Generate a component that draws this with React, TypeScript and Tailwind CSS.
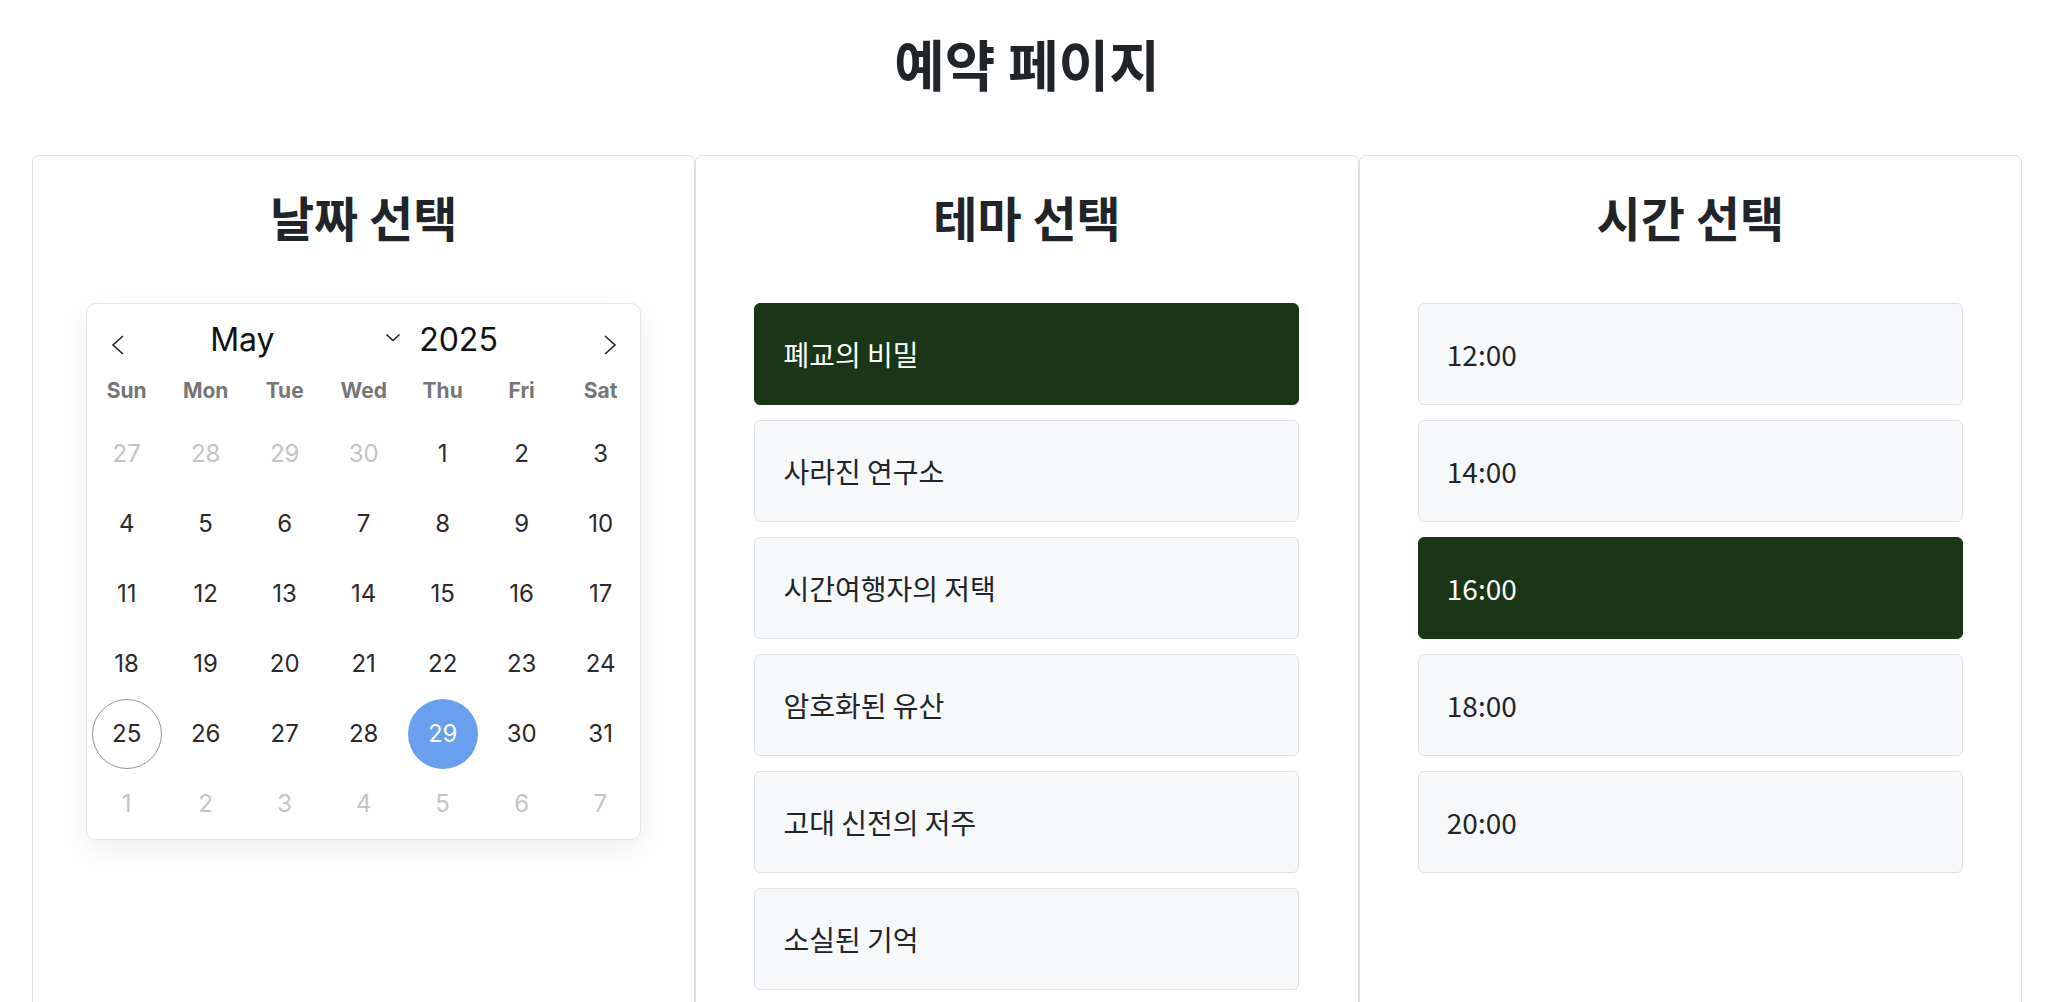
import React, { useState } from 'react';

const themes = ['폐교의 비밀', '사라진 연구소', '시간여행자의 저택', '암호화된 유산', '고대 신전의 저주', '소실된 기억'];
const times = ['12:00', '14:00', '16:00', '18:00', '20:00'];
const weekdays = ['Sun', 'Mon', 'Tue', 'Wed', 'Thu', 'Fri', 'Sat'];

const kr = { fontFamily: '"Noto Sans CJK KR", "Noto Sans", sans-serif' };
const latin = { fontFamily: 'Inter, "Noto Sans", sans-serif' };

type Day = { n: number; outside: boolean };

const buildDays = (): Day[] => {
  const days: Day[] = [];
  [27, 28, 29, 30].forEach(n => days.push({ n, outside: true }));
  for (let i = 1; i <= 31; i++) days.push({ n: i, outside: false });
  for (let i = 1; i <= 7; i++) days.push({ n: i, outside: true });
  return days;
};

const Chevron = ({ dir }: { dir: 'left' | 'right' }) => (
  <svg width="14" height="22" viewBox="0 0 14 22" fill="none">
    <path
      d={dir === 'left' ? 'M12 2 L2 11 L12 20' : 'M2 2 L12 11 L2 20'}
      stroke="#222"
      strokeWidth="1.6"
    />
  </svg>
);

const Calendar: React.FC = () => {
  const [selected, setSelected] = useState(29);
  const days = buildDays();

  return (
    <div
      className="w-[555px] mx-auto mt-[4px] bg-white border border-[#e4e4e4] rounded-[10px] shadow-[0_10px_28px_rgba(0,0,0,0.07)] pt-[12px]"
      style={latin}
    >
      <div className="h-[48px] flex items-center">
        <button className="ml-[24px] w-[14px] flex items-center mt-[10px]">
          <Chevron dir="left" />
        </button>
        <span className="ml-[85px] w-[175px] text-[32px] text-[#111] leading-none">May</span>
        <svg width="16" height="9" viewBox="0 0 16 9" fill="none" className="mb-[4px]">
          <path d="M1.5 1.5 L8 7.5 L14.5 1.5" stroke="#222" strokeWidth="1.6" />
        </svg>
        <span className="ml-[18px] text-[32px] text-[#111] leading-none">2025</span>
        <button className="ml-auto mr-[23px] w-[14px] flex items-center mt-[10px]">
          <Chevron dir="right" />
        </button>
      </div>
      <div className="grid grid-cols-7 h-[55px] items-center">
        {weekdays.map(w => (
          <div key={w} className="text-center text-[21px] font-bold text-[#767676]">{w}</div>
        ))}
      </div>
      <div className="grid grid-cols-7">
        {days.map((d, i) => {
          const isSel = !d.outside && d.n === selected;
          const isToday = !d.outside && d.n === 25;
          return (
            <div key={i} className="h-[70px] flex items-center justify-center">
              <button
                onClick={() => !d.outside && setSelected(d.n)}
                className={`w-[70px] h-[70px] rounded-full flex items-center justify-center text-[24px] ${
                  isSel
                    ? 'bg-[#6a9fef] text-white'
                    : isToday
                    ? 'border border-[#8e95a3] text-[#2b2b2b]'
                    : d.outside
                    ? 'text-[#c4c4c4]'
                    : 'text-[#2b2b2b]'
                }`}
              >
                {d.n}
              </button>
            </div>
          );
        })}
      </div>
    </div>
  );
};

const OptionList: React.FC<{ items: string[]; initial: string }> = ({ items, initial }) => {
  const [active, setActive] = useState(initial);
  return (
    <div className="w-[545px] mx-auto flex flex-col gap-[15px]">
      {items.map(it => (
        <button
          key={it}
          onClick={() => setActive(it)}
          className={`h-[102px] px-[28px] text-left text-[28px] rounded-[6px] border ${
            active === it
              ? 'bg-[#1b3517] border-[#1b3517] text-white'
              : 'bg-[#f7f8fa] border-[#dfe2e6] text-[#212529]'
          }`}
          style={kr}
        >
          {it}
        </button>
      ))}
    </div>
  );
};

const Card: React.FC<{ title: string; children: React.ReactNode }> = ({ title, children }) => (
  <div className="border border-[#dee2e6] rounded-[7px] bg-white pt-[32px] pb-[40px]">
    <h2 className="text-center text-[48px] font-bold text-[#212529] leading-[1.2] mb-[57px]" style={kr}>
      {title}
    </h2>
    {children}
  </div>
);

export default function App() {
  return (
    <div className="min-h-screen bg-white pl-[32px] pr-[36px]" style={kr}>
      <h1 className="text-center text-[55px] font-bold text-[#212529] leading-[1.2] pt-[29px] pb-[60px]">
        예약 페이지
      </h1>
      <div className="grid grid-cols-3">
        <Card title="날짜 선택">
          <Calendar />
        </Card>
        <Card title="테마 선택">
          <OptionList items={themes} initial="폐교의 비밀" />
        </Card>
        <Card title="시간 선택">
          <OptionList items={times} initial="16:00" />
        </Card>
      </div>
    </div>
  );
}
